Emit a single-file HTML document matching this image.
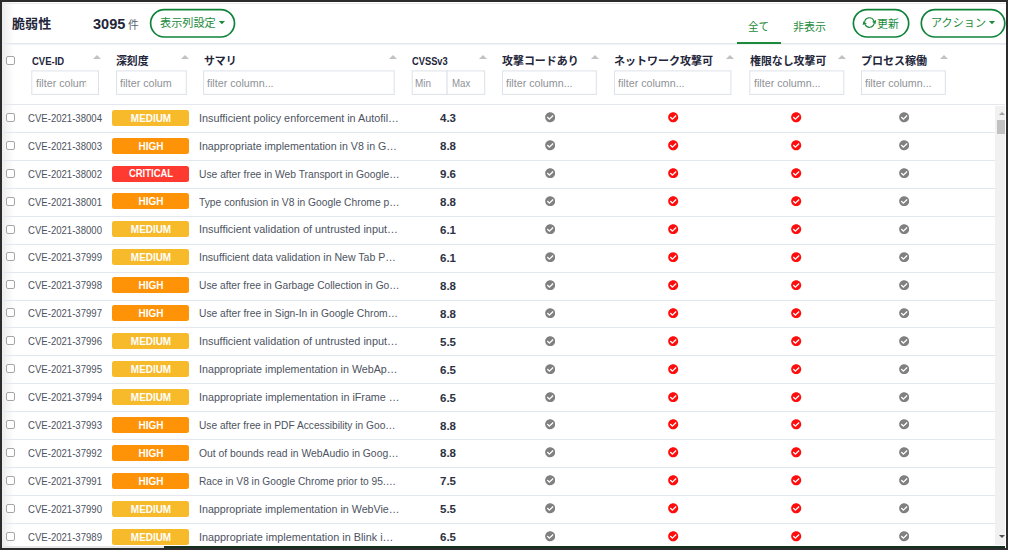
<!DOCTYPE html><html lang="ja"><head><meta charset="utf-8"><title>脆弱性</title><style>

html,body{margin:0;padding:0;background:#fff}
body{width:1010px;height:552px;position:relative;overflow:hidden;font-family:"Liberation Sans","Noto Sans CJK JP",sans-serif}
.t{position:absolute;white-space:nowrap;line-height:1;transform-origin:0 50%;display:block}
.fr{position:absolute;left:0;top:0;width:1004px;height:546px;border:2px solid #2b2b2b;box-sizing:content-box}
.hl{position:absolute;left:2px;width:1004px;height:1px;background:#e4e8ed}
.rl{position:absolute;left:2px;width:993px;height:1px;background:#e3e8ee}
.cb{position:absolute;left:6.2px;width:7px;height:7px;border:1px solid #a6a6a6;border-radius:2px;background:#fff}
.bd{position:absolute;left:112px;width:77.3px;height:16px;border-radius:2.5px}
.in{position:absolute;top:70.5px;height:22.4px;border:1px solid #dde3ea;background:#fff;box-sizing:content-box;overflow:hidden}
.ic{position:absolute;display:block}
.ar{position:absolute;width:0;height:0;border-left:4.3px solid transparent;border-right:4.3px solid transparent;border-bottom:4px solid #c2c2c2;top:54.6px}
svg.ov{position:absolute;left:0;top:0}

</style></head><body>
<div style="position:absolute;left:2px;top:2px;width:12px;height:544px;background:linear-gradient(90deg,#ececec,#fff)"></div>
<div class="hl" style="top:3px;background:#e9e9e9"></div>
<div class="hl" style="top:43px;background:#e5e8ec"></div>
<div class="hl" style="top:44px;background:#eff1f4"></div>
<div class="hl" style="top:104px;width:1003px"></div>
<div style="position:absolute;left:737px;top:41.7px;width:44px;height:2.3px;background:#1b8a3b"></div>
<div style="position:absolute;left:995.3px;top:105.5px;width:10.2px;height:439px;background:#f1f1f1"></div>
<div style="position:absolute;left:996.8px;top:120.3px;width:8.7px;height:14.1px;background:#c1c1c1"></div>
<div style="position:absolute;left:999px;top:111.6px;width:0;height:0;border-left:3.2px solid transparent;border-right:3.2px solid transparent;border-bottom:3.2px solid #a3a3a3"></div>
<div style="position:absolute;left:999px;top:535.4px;width:0;height:0;border-left:3.2px solid transparent;border-right:3.2px solid transparent;border-top:3.2px solid #505050"></div>
<div style="position:absolute;left:2px;top:546px;width:162px;height:2px;background:#e6e6e6"></div>
<div style="position:absolute;left:164px;top:546px;width:841px;height:2px;background:#15301f"></div>
<div class="cb" style="top:56.3px"></div>
<div class="ar" style="left:93.10px"></div>
<div class="ar" style="left:180.90px"></div>
<div class="ar" style="left:388.80px"></div>
<div class="ar" style="left:479.30px"></div>
<div class="ar" style="left:590.90px"></div>
<div class="ar" style="left:725.50px"></div>
<div class="ar" style="left:838.40px"></div>
<div class="ar" style="left:939.90px"></div>
<svg class="ov" width="1010" height="552" viewBox="0 0 1010 552" fill="none">
<rect x="150.60" y="9.6" width="83.90" height="27.4" rx="13.7" stroke="#10833a" stroke-width="1.7" fill="#fff"/>
<rect x="853.40" y="9.6" width="55.30" height="27.4" rx="13.7" stroke="#10833a" stroke-width="1.7" fill="#fff"/>
<rect x="921.30" y="9.6" width="83.50" height="27.4" rx="13.7" stroke="#10833a" stroke-width="1.7" fill="#fff"/>
<rect x="31.80" y="70.9" width="66.70" height="23.5" stroke="#dce2e9" stroke-width="1" fill="#fff"/>
<rect x="116.60" y="70.9" width="69.70" height="23.5" stroke="#dce2e9" stroke-width="1" fill="#fff"/>
<rect x="203.60" y="70.9" width="190.60" height="23.5" stroke="#dce2e9" stroke-width="1" fill="#fff"/>
<rect x="412.20" y="70.9" width="34.90" height="23.5" stroke="#dce2e9" stroke-width="1" fill="#fff"/>
<rect x="447.10" y="70.9" width="37.60" height="23.5" stroke="#dce2e9" stroke-width="1" fill="#fff"/>
<rect x="502.50" y="70.9" width="93.80" height="23.5" stroke="#dce2e9" stroke-width="1" fill="#fff"/>
<rect x="614.50" y="70.9" width="116.40" height="23.5" stroke="#dce2e9" stroke-width="1" fill="#fff"/>
<rect x="749.80" y="70.9" width="94.00" height="23.5" stroke="#dce2e9" stroke-width="1" fill="#fff"/>
<rect x="861.50" y="70.9" width="83.80" height="23.5" stroke="#dce2e9" stroke-width="1" fill="#fff"/>
<path d="M218.80 20.9h6.2l-3.1 3.3z" fill="#1b8a3b"/>
<path d="M988.90 20.9h6.2l-3.1 3.3z" fill="#1b8a3b"/>
<g stroke="#1b8a3b" stroke-width="1.15" fill="none" stroke-linecap="round"><path d="M864.7 21.7A4.75 4.75 0 0 1 873.7 20.6"/><path d="M874.1 23.4A4.75 4.75 0 0 1 865.1 24.5"/></g><path d="M876.2 20.1L875.5 23.9L872.0 21.7Z" fill="#1b8a3b"/><path d="M862.6 25.0L863.3 21.2L866.8 23.4Z" fill="#1b8a3b"/>
</svg>
<div class="rl" style="top:131.93px"></div>
<div class="cb" style="top:112.80px"></div>
<div class="bd" style="top:109.70px;background:#f6ba2b"></div>
<svg class="ic" style="left:544.60px;top:112.20px" width="10.4" height="10.4" viewBox="0 0 512 512"><path fill="#808080" d="M504 256c0 136.967-111.033 248-248 248S8 392.967 8 256 119.033 8 256 8s248 111.033 248 248zM227.314 387.314l184-184c6.248-6.248 6.248-16.379 0-22.627l-22.627-22.627c-6.248-6.249-16.379-6.249-22.628 0L216 308.118l-70.059-70.059c-6.248-6.248-16.379-6.248-22.628 0l-22.627 22.627c-6.248 6.248-6.248 16.379 0 22.627l104 104c6.249 6.249 16.379 6.249 22.628.001z"/></svg>
<svg class="ic" style="left:668.30px;top:112.20px" width="10.4" height="10.4" viewBox="0 0 512 512"><path fill="#ff0d0d" d="M504 256c0 136.967-111.033 248-248 248S8 392.967 8 256 119.033 8 256 8s248 111.033 248 248zM227.314 387.314l184-184c6.248-6.248 6.248-16.379 0-22.627l-22.627-22.627c-6.248-6.249-16.379-6.249-22.628 0L216 308.118l-70.059-70.059c-6.248-6.248-16.379-6.248-22.628 0l-22.627 22.627c-6.248 6.248-6.248 16.379 0 22.627l104 104c6.249 6.249 16.379 6.249 22.628.001z"/></svg>
<svg class="ic" style="left:791.40px;top:112.20px" width="10.4" height="10.4" viewBox="0 0 512 512"><path fill="#ff0d0d" d="M504 256c0 136.967-111.033 248-248 248S8 392.967 8 256 119.033 8 256 8s248 111.033 248 248zM227.314 387.314l184-184c6.248-6.248 6.248-16.379 0-22.627l-22.627-22.627c-6.248-6.249-16.379-6.249-22.628 0L216 308.118l-70.059-70.059c-6.248-6.248-16.379-6.248-22.628 0l-22.627 22.627c-6.248 6.248-6.248 16.379 0 22.627l104 104c6.249 6.249 16.379 6.249 22.628.001z"/></svg>
<svg class="ic" style="left:898.50px;top:112.20px" width="10.4" height="10.4" viewBox="0 0 512 512"><path fill="#808080" d="M504 256c0 136.967-111.033 248-248 248S8 392.967 8 256 119.033 8 256 8s248 111.033 248 248zM227.314 387.314l184-184c6.248-6.248 6.248-16.379 0-22.627l-22.627-22.627c-6.248-6.249-16.379-6.249-22.628 0L216 308.118l-70.059-70.059c-6.248-6.248-16.379-6.248-22.628 0l-22.627 22.627c-6.248 6.248-6.248 16.379 0 22.627l104 104c6.249 6.249 16.379 6.249 22.628.001z"/></svg>
<div class="rl" style="top:159.86px"></div>
<div class="cb" style="top:140.73px"></div>
<div class="bd" style="top:137.63px;background:#ff9307"></div>
<svg class="ic" style="left:544.60px;top:140.13px" width="10.4" height="10.4" viewBox="0 0 512 512"><path fill="#808080" d="M504 256c0 136.967-111.033 248-248 248S8 392.967 8 256 119.033 8 256 8s248 111.033 248 248zM227.314 387.314l184-184c6.248-6.248 6.248-16.379 0-22.627l-22.627-22.627c-6.248-6.249-16.379-6.249-22.628 0L216 308.118l-70.059-70.059c-6.248-6.248-16.379-6.248-22.628 0l-22.627 22.627c-6.248 6.248-6.248 16.379 0 22.627l104 104c6.249 6.249 16.379 6.249 22.628.001z"/></svg>
<svg class="ic" style="left:668.30px;top:140.13px" width="10.4" height="10.4" viewBox="0 0 512 512"><path fill="#ff0d0d" d="M504 256c0 136.967-111.033 248-248 248S8 392.967 8 256 119.033 8 256 8s248 111.033 248 248zM227.314 387.314l184-184c6.248-6.248 6.248-16.379 0-22.627l-22.627-22.627c-6.248-6.249-16.379-6.249-22.628 0L216 308.118l-70.059-70.059c-6.248-6.248-16.379-6.248-22.628 0l-22.627 22.627c-6.248 6.248-6.248 16.379 0 22.627l104 104c6.249 6.249 16.379 6.249 22.628.001z"/></svg>
<svg class="ic" style="left:791.40px;top:140.13px" width="10.4" height="10.4" viewBox="0 0 512 512"><path fill="#ff0d0d" d="M504 256c0 136.967-111.033 248-248 248S8 392.967 8 256 119.033 8 256 8s248 111.033 248 248zM227.314 387.314l184-184c6.248-6.248 6.248-16.379 0-22.627l-22.627-22.627c-6.248-6.249-16.379-6.249-22.628 0L216 308.118l-70.059-70.059c-6.248-6.248-16.379-6.248-22.628 0l-22.627 22.627c-6.248 6.248-6.248 16.379 0 22.627l104 104c6.249 6.249 16.379 6.249 22.628.001z"/></svg>
<svg class="ic" style="left:898.50px;top:140.13px" width="10.4" height="10.4" viewBox="0 0 512 512"><path fill="#808080" d="M504 256c0 136.967-111.033 248-248 248S8 392.967 8 256 119.033 8 256 8s248 111.033 248 248zM227.314 387.314l184-184c6.248-6.248 6.248-16.379 0-22.627l-22.627-22.627c-6.248-6.249-16.379-6.249-22.628 0L216 308.118l-70.059-70.059c-6.248-6.248-16.379-6.248-22.628 0l-22.627 22.627c-6.248 6.248-6.248 16.379 0 22.627l104 104c6.249 6.249 16.379 6.249 22.628.001z"/></svg>
<div class="rl" style="top:187.79px"></div>
<div class="cb" style="top:168.66px"></div>
<div class="bd" style="top:165.56px;background:#ff3a30"></div>
<svg class="ic" style="left:544.60px;top:168.06px" width="10.4" height="10.4" viewBox="0 0 512 512"><path fill="#808080" d="M504 256c0 136.967-111.033 248-248 248S8 392.967 8 256 119.033 8 256 8s248 111.033 248 248zM227.314 387.314l184-184c6.248-6.248 6.248-16.379 0-22.627l-22.627-22.627c-6.248-6.249-16.379-6.249-22.628 0L216 308.118l-70.059-70.059c-6.248-6.248-16.379-6.248-22.628 0l-22.627 22.627c-6.248 6.248-6.248 16.379 0 22.627l104 104c6.249 6.249 16.379 6.249 22.628.001z"/></svg>
<svg class="ic" style="left:668.30px;top:168.06px" width="10.4" height="10.4" viewBox="0 0 512 512"><path fill="#ff0d0d" d="M504 256c0 136.967-111.033 248-248 248S8 392.967 8 256 119.033 8 256 8s248 111.033 248 248zM227.314 387.314l184-184c6.248-6.248 6.248-16.379 0-22.627l-22.627-22.627c-6.248-6.249-16.379-6.249-22.628 0L216 308.118l-70.059-70.059c-6.248-6.248-16.379-6.248-22.628 0l-22.627 22.627c-6.248 6.248-6.248 16.379 0 22.627l104 104c6.249 6.249 16.379 6.249 22.628.001z"/></svg>
<svg class="ic" style="left:791.40px;top:168.06px" width="10.4" height="10.4" viewBox="0 0 512 512"><path fill="#ff0d0d" d="M504 256c0 136.967-111.033 248-248 248S8 392.967 8 256 119.033 8 256 8s248 111.033 248 248zM227.314 387.314l184-184c6.248-6.248 6.248-16.379 0-22.627l-22.627-22.627c-6.248-6.249-16.379-6.249-22.628 0L216 308.118l-70.059-70.059c-6.248-6.248-16.379-6.248-22.628 0l-22.627 22.627c-6.248 6.248-6.248 16.379 0 22.627l104 104c6.249 6.249 16.379 6.249 22.628.001z"/></svg>
<svg class="ic" style="left:898.50px;top:168.06px" width="10.4" height="10.4" viewBox="0 0 512 512"><path fill="#808080" d="M504 256c0 136.967-111.033 248-248 248S8 392.967 8 256 119.033 8 256 8s248 111.033 248 248zM227.314 387.314l184-184c6.248-6.248 6.248-16.379 0-22.627l-22.627-22.627c-6.248-6.249-16.379-6.249-22.628 0L216 308.118l-70.059-70.059c-6.248-6.248-16.379-6.248-22.628 0l-22.627 22.627c-6.248 6.248-6.248 16.379 0 22.627l104 104c6.249 6.249 16.379 6.249 22.628.001z"/></svg>
<div class="rl" style="top:215.72px"></div>
<div class="cb" style="top:196.59px"></div>
<div class="bd" style="top:193.49px;background:#ff9307"></div>
<svg class="ic" style="left:544.60px;top:195.99px" width="10.4" height="10.4" viewBox="0 0 512 512"><path fill="#808080" d="M504 256c0 136.967-111.033 248-248 248S8 392.967 8 256 119.033 8 256 8s248 111.033 248 248zM227.314 387.314l184-184c6.248-6.248 6.248-16.379 0-22.627l-22.627-22.627c-6.248-6.249-16.379-6.249-22.628 0L216 308.118l-70.059-70.059c-6.248-6.248-16.379-6.248-22.628 0l-22.627 22.627c-6.248 6.248-6.248 16.379 0 22.627l104 104c6.249 6.249 16.379 6.249 22.628.001z"/></svg>
<svg class="ic" style="left:668.30px;top:195.99px" width="10.4" height="10.4" viewBox="0 0 512 512"><path fill="#ff0d0d" d="M504 256c0 136.967-111.033 248-248 248S8 392.967 8 256 119.033 8 256 8s248 111.033 248 248zM227.314 387.314l184-184c6.248-6.248 6.248-16.379 0-22.627l-22.627-22.627c-6.248-6.249-16.379-6.249-22.628 0L216 308.118l-70.059-70.059c-6.248-6.248-16.379-6.248-22.628 0l-22.627 22.627c-6.248 6.248-6.248 16.379 0 22.627l104 104c6.249 6.249 16.379 6.249 22.628.001z"/></svg>
<svg class="ic" style="left:791.40px;top:195.99px" width="10.4" height="10.4" viewBox="0 0 512 512"><path fill="#ff0d0d" d="M504 256c0 136.967-111.033 248-248 248S8 392.967 8 256 119.033 8 256 8s248 111.033 248 248zM227.314 387.314l184-184c6.248-6.248 6.248-16.379 0-22.627l-22.627-22.627c-6.248-6.249-16.379-6.249-22.628 0L216 308.118l-70.059-70.059c-6.248-6.248-16.379-6.248-22.628 0l-22.627 22.627c-6.248 6.248-6.248 16.379 0 22.627l104 104c6.249 6.249 16.379 6.249 22.628.001z"/></svg>
<svg class="ic" style="left:898.50px;top:195.99px" width="10.4" height="10.4" viewBox="0 0 512 512"><path fill="#808080" d="M504 256c0 136.967-111.033 248-248 248S8 392.967 8 256 119.033 8 256 8s248 111.033 248 248zM227.314 387.314l184-184c6.248-6.248 6.248-16.379 0-22.627l-22.627-22.627c-6.248-6.249-16.379-6.249-22.628 0L216 308.118l-70.059-70.059c-6.248-6.248-16.379-6.248-22.628 0l-22.627 22.627c-6.248 6.248-6.248 16.379 0 22.627l104 104c6.249 6.249 16.379 6.249 22.628.001z"/></svg>
<div class="rl" style="top:243.65px"></div>
<div class="cb" style="top:224.52px"></div>
<div class="bd" style="top:221.42px;background:#f6ba2b"></div>
<svg class="ic" style="left:544.60px;top:223.92px" width="10.4" height="10.4" viewBox="0 0 512 512"><path fill="#808080" d="M504 256c0 136.967-111.033 248-248 248S8 392.967 8 256 119.033 8 256 8s248 111.033 248 248zM227.314 387.314l184-184c6.248-6.248 6.248-16.379 0-22.627l-22.627-22.627c-6.248-6.249-16.379-6.249-22.628 0L216 308.118l-70.059-70.059c-6.248-6.248-16.379-6.248-22.628 0l-22.627 22.627c-6.248 6.248-6.248 16.379 0 22.627l104 104c6.249 6.249 16.379 6.249 22.628.001z"/></svg>
<svg class="ic" style="left:668.30px;top:223.92px" width="10.4" height="10.4" viewBox="0 0 512 512"><path fill="#ff0d0d" d="M504 256c0 136.967-111.033 248-248 248S8 392.967 8 256 119.033 8 256 8s248 111.033 248 248zM227.314 387.314l184-184c6.248-6.248 6.248-16.379 0-22.627l-22.627-22.627c-6.248-6.249-16.379-6.249-22.628 0L216 308.118l-70.059-70.059c-6.248-6.248-16.379-6.248-22.628 0l-22.627 22.627c-6.248 6.248-6.248 16.379 0 22.627l104 104c6.249 6.249 16.379 6.249 22.628.001z"/></svg>
<svg class="ic" style="left:791.40px;top:223.92px" width="10.4" height="10.4" viewBox="0 0 512 512"><path fill="#ff0d0d" d="M504 256c0 136.967-111.033 248-248 248S8 392.967 8 256 119.033 8 256 8s248 111.033 248 248zM227.314 387.314l184-184c6.248-6.248 6.248-16.379 0-22.627l-22.627-22.627c-6.248-6.249-16.379-6.249-22.628 0L216 308.118l-70.059-70.059c-6.248-6.248-16.379-6.248-22.628 0l-22.627 22.627c-6.248 6.248-6.248 16.379 0 22.627l104 104c6.249 6.249 16.379 6.249 22.628.001z"/></svg>
<svg class="ic" style="left:898.50px;top:223.92px" width="10.4" height="10.4" viewBox="0 0 512 512"><path fill="#808080" d="M504 256c0 136.967-111.033 248-248 248S8 392.967 8 256 119.033 8 256 8s248 111.033 248 248zM227.314 387.314l184-184c6.248-6.248 6.248-16.379 0-22.627l-22.627-22.627c-6.248-6.249-16.379-6.249-22.628 0L216 308.118l-70.059-70.059c-6.248-6.248-16.379-6.248-22.628 0l-22.627 22.627c-6.248 6.248-6.248 16.379 0 22.627l104 104c6.249 6.249 16.379 6.249 22.628.001z"/></svg>
<div class="rl" style="top:271.58px"></div>
<div class="cb" style="top:252.45px"></div>
<div class="bd" style="top:249.35px;background:#f6ba2b"></div>
<svg class="ic" style="left:544.60px;top:251.85px" width="10.4" height="10.4" viewBox="0 0 512 512"><path fill="#808080" d="M504 256c0 136.967-111.033 248-248 248S8 392.967 8 256 119.033 8 256 8s248 111.033 248 248zM227.314 387.314l184-184c6.248-6.248 6.248-16.379 0-22.627l-22.627-22.627c-6.248-6.249-16.379-6.249-22.628 0L216 308.118l-70.059-70.059c-6.248-6.248-16.379-6.248-22.628 0l-22.627 22.627c-6.248 6.248-6.248 16.379 0 22.627l104 104c6.249 6.249 16.379 6.249 22.628.001z"/></svg>
<svg class="ic" style="left:668.30px;top:251.85px" width="10.4" height="10.4" viewBox="0 0 512 512"><path fill="#ff0d0d" d="M504 256c0 136.967-111.033 248-248 248S8 392.967 8 256 119.033 8 256 8s248 111.033 248 248zM227.314 387.314l184-184c6.248-6.248 6.248-16.379 0-22.627l-22.627-22.627c-6.248-6.249-16.379-6.249-22.628 0L216 308.118l-70.059-70.059c-6.248-6.248-16.379-6.248-22.628 0l-22.627 22.627c-6.248 6.248-6.248 16.379 0 22.627l104 104c6.249 6.249 16.379 6.249 22.628.001z"/></svg>
<svg class="ic" style="left:791.40px;top:251.85px" width="10.4" height="10.4" viewBox="0 0 512 512"><path fill="#ff0d0d" d="M504 256c0 136.967-111.033 248-248 248S8 392.967 8 256 119.033 8 256 8s248 111.033 248 248zM227.314 387.314l184-184c6.248-6.248 6.248-16.379 0-22.627l-22.627-22.627c-6.248-6.249-16.379-6.249-22.628 0L216 308.118l-70.059-70.059c-6.248-6.248-16.379-6.248-22.628 0l-22.627 22.627c-6.248 6.248-6.248 16.379 0 22.627l104 104c6.249 6.249 16.379 6.249 22.628.001z"/></svg>
<svg class="ic" style="left:898.50px;top:251.85px" width="10.4" height="10.4" viewBox="0 0 512 512"><path fill="#808080" d="M504 256c0 136.967-111.033 248-248 248S8 392.967 8 256 119.033 8 256 8s248 111.033 248 248zM227.314 387.314l184-184c6.248-6.248 6.248-16.379 0-22.627l-22.627-22.627c-6.248-6.249-16.379-6.249-22.628 0L216 308.118l-70.059-70.059c-6.248-6.248-16.379-6.248-22.628 0l-22.627 22.627c-6.248 6.248-6.248 16.379 0 22.627l104 104c6.249 6.249 16.379 6.249 22.628.001z"/></svg>
<div class="rl" style="top:299.51px"></div>
<div class="cb" style="top:280.38px"></div>
<div class="bd" style="top:277.28px;background:#ff9307"></div>
<svg class="ic" style="left:544.60px;top:279.78px" width="10.4" height="10.4" viewBox="0 0 512 512"><path fill="#808080" d="M504 256c0 136.967-111.033 248-248 248S8 392.967 8 256 119.033 8 256 8s248 111.033 248 248zM227.314 387.314l184-184c6.248-6.248 6.248-16.379 0-22.627l-22.627-22.627c-6.248-6.249-16.379-6.249-22.628 0L216 308.118l-70.059-70.059c-6.248-6.248-16.379-6.248-22.628 0l-22.627 22.627c-6.248 6.248-6.248 16.379 0 22.627l104 104c6.249 6.249 16.379 6.249 22.628.001z"/></svg>
<svg class="ic" style="left:668.30px;top:279.78px" width="10.4" height="10.4" viewBox="0 0 512 512"><path fill="#ff0d0d" d="M504 256c0 136.967-111.033 248-248 248S8 392.967 8 256 119.033 8 256 8s248 111.033 248 248zM227.314 387.314l184-184c6.248-6.248 6.248-16.379 0-22.627l-22.627-22.627c-6.248-6.249-16.379-6.249-22.628 0L216 308.118l-70.059-70.059c-6.248-6.248-16.379-6.248-22.628 0l-22.627 22.627c-6.248 6.248-6.248 16.379 0 22.627l104 104c6.249 6.249 16.379 6.249 22.628.001z"/></svg>
<svg class="ic" style="left:791.40px;top:279.78px" width="10.4" height="10.4" viewBox="0 0 512 512"><path fill="#ff0d0d" d="M504 256c0 136.967-111.033 248-248 248S8 392.967 8 256 119.033 8 256 8s248 111.033 248 248zM227.314 387.314l184-184c6.248-6.248 6.248-16.379 0-22.627l-22.627-22.627c-6.248-6.249-16.379-6.249-22.628 0L216 308.118l-70.059-70.059c-6.248-6.248-16.379-6.248-22.628 0l-22.627 22.627c-6.248 6.248-6.248 16.379 0 22.627l104 104c6.249 6.249 16.379 6.249 22.628.001z"/></svg>
<svg class="ic" style="left:898.50px;top:279.78px" width="10.4" height="10.4" viewBox="0 0 512 512"><path fill="#808080" d="M504 256c0 136.967-111.033 248-248 248S8 392.967 8 256 119.033 8 256 8s248 111.033 248 248zM227.314 387.314l184-184c6.248-6.248 6.248-16.379 0-22.627l-22.627-22.627c-6.248-6.249-16.379-6.249-22.628 0L216 308.118l-70.059-70.059c-6.248-6.248-16.379-6.248-22.628 0l-22.627 22.627c-6.248 6.248-6.248 16.379 0 22.627l104 104c6.249 6.249 16.379 6.249 22.628.001z"/></svg>
<div class="rl" style="top:327.44px"></div>
<div class="cb" style="top:308.31px"></div>
<div class="bd" style="top:305.21px;background:#ff9307"></div>
<svg class="ic" style="left:544.60px;top:307.71px" width="10.4" height="10.4" viewBox="0 0 512 512"><path fill="#808080" d="M504 256c0 136.967-111.033 248-248 248S8 392.967 8 256 119.033 8 256 8s248 111.033 248 248zM227.314 387.314l184-184c6.248-6.248 6.248-16.379 0-22.627l-22.627-22.627c-6.248-6.249-16.379-6.249-22.628 0L216 308.118l-70.059-70.059c-6.248-6.248-16.379-6.248-22.628 0l-22.627 22.627c-6.248 6.248-6.248 16.379 0 22.627l104 104c6.249 6.249 16.379 6.249 22.628.001z"/></svg>
<svg class="ic" style="left:668.30px;top:307.71px" width="10.4" height="10.4" viewBox="0 0 512 512"><path fill="#ff0d0d" d="M504 256c0 136.967-111.033 248-248 248S8 392.967 8 256 119.033 8 256 8s248 111.033 248 248zM227.314 387.314l184-184c6.248-6.248 6.248-16.379 0-22.627l-22.627-22.627c-6.248-6.249-16.379-6.249-22.628 0L216 308.118l-70.059-70.059c-6.248-6.248-16.379-6.248-22.628 0l-22.627 22.627c-6.248 6.248-6.248 16.379 0 22.627l104 104c6.249 6.249 16.379 6.249 22.628.001z"/></svg>
<svg class="ic" style="left:791.40px;top:307.71px" width="10.4" height="10.4" viewBox="0 0 512 512"><path fill="#ff0d0d" d="M504 256c0 136.967-111.033 248-248 248S8 392.967 8 256 119.033 8 256 8s248 111.033 248 248zM227.314 387.314l184-184c6.248-6.248 6.248-16.379 0-22.627l-22.627-22.627c-6.248-6.249-16.379-6.249-22.628 0L216 308.118l-70.059-70.059c-6.248-6.248-16.379-6.248-22.628 0l-22.627 22.627c-6.248 6.248-6.248 16.379 0 22.627l104 104c6.249 6.249 16.379 6.249 22.628.001z"/></svg>
<svg class="ic" style="left:898.50px;top:307.71px" width="10.4" height="10.4" viewBox="0 0 512 512"><path fill="#808080" d="M504 256c0 136.967-111.033 248-248 248S8 392.967 8 256 119.033 8 256 8s248 111.033 248 248zM227.314 387.314l184-184c6.248-6.248 6.248-16.379 0-22.627l-22.627-22.627c-6.248-6.249-16.379-6.249-22.628 0L216 308.118l-70.059-70.059c-6.248-6.248-16.379-6.248-22.628 0l-22.627 22.627c-6.248 6.248-6.248 16.379 0 22.627l104 104c6.249 6.249 16.379 6.249 22.628.001z"/></svg>
<div class="rl" style="top:355.37px"></div>
<div class="cb" style="top:336.24px"></div>
<div class="bd" style="top:333.14px;background:#f6ba2b"></div>
<svg class="ic" style="left:544.60px;top:335.64px" width="10.4" height="10.4" viewBox="0 0 512 512"><path fill="#808080" d="M504 256c0 136.967-111.033 248-248 248S8 392.967 8 256 119.033 8 256 8s248 111.033 248 248zM227.314 387.314l184-184c6.248-6.248 6.248-16.379 0-22.627l-22.627-22.627c-6.248-6.249-16.379-6.249-22.628 0L216 308.118l-70.059-70.059c-6.248-6.248-16.379-6.248-22.628 0l-22.627 22.627c-6.248 6.248-6.248 16.379 0 22.627l104 104c6.249 6.249 16.379 6.249 22.628.001z"/></svg>
<svg class="ic" style="left:668.30px;top:335.64px" width="10.4" height="10.4" viewBox="0 0 512 512"><path fill="#ff0d0d" d="M504 256c0 136.967-111.033 248-248 248S8 392.967 8 256 119.033 8 256 8s248 111.033 248 248zM227.314 387.314l184-184c6.248-6.248 6.248-16.379 0-22.627l-22.627-22.627c-6.248-6.249-16.379-6.249-22.628 0L216 308.118l-70.059-70.059c-6.248-6.248-16.379-6.248-22.628 0l-22.627 22.627c-6.248 6.248-6.248 16.379 0 22.627l104 104c6.249 6.249 16.379 6.249 22.628.001z"/></svg>
<svg class="ic" style="left:791.40px;top:335.64px" width="10.4" height="10.4" viewBox="0 0 512 512"><path fill="#ff0d0d" d="M504 256c0 136.967-111.033 248-248 248S8 392.967 8 256 119.033 8 256 8s248 111.033 248 248zM227.314 387.314l184-184c6.248-6.248 6.248-16.379 0-22.627l-22.627-22.627c-6.248-6.249-16.379-6.249-22.628 0L216 308.118l-70.059-70.059c-6.248-6.248-16.379-6.248-22.628 0l-22.627 22.627c-6.248 6.248-6.248 16.379 0 22.627l104 104c6.249 6.249 16.379 6.249 22.628.001z"/></svg>
<svg class="ic" style="left:898.50px;top:335.64px" width="10.4" height="10.4" viewBox="0 0 512 512"><path fill="#808080" d="M504 256c0 136.967-111.033 248-248 248S8 392.967 8 256 119.033 8 256 8s248 111.033 248 248zM227.314 387.314l184-184c6.248-6.248 6.248-16.379 0-22.627l-22.627-22.627c-6.248-6.249-16.379-6.249-22.628 0L216 308.118l-70.059-70.059c-6.248-6.248-16.379-6.248-22.628 0l-22.627 22.627c-6.248 6.248-6.248 16.379 0 22.627l104 104c6.249 6.249 16.379 6.249 22.628.001z"/></svg>
<div class="rl" style="top:383.30px"></div>
<div class="cb" style="top:364.17px"></div>
<div class="bd" style="top:361.07px;background:#f6ba2b"></div>
<svg class="ic" style="left:544.60px;top:363.57px" width="10.4" height="10.4" viewBox="0 0 512 512"><path fill="#808080" d="M504 256c0 136.967-111.033 248-248 248S8 392.967 8 256 119.033 8 256 8s248 111.033 248 248zM227.314 387.314l184-184c6.248-6.248 6.248-16.379 0-22.627l-22.627-22.627c-6.248-6.249-16.379-6.249-22.628 0L216 308.118l-70.059-70.059c-6.248-6.248-16.379-6.248-22.628 0l-22.627 22.627c-6.248 6.248-6.248 16.379 0 22.627l104 104c6.249 6.249 16.379 6.249 22.628.001z"/></svg>
<svg class="ic" style="left:668.30px;top:363.57px" width="10.4" height="10.4" viewBox="0 0 512 512"><path fill="#ff0d0d" d="M504 256c0 136.967-111.033 248-248 248S8 392.967 8 256 119.033 8 256 8s248 111.033 248 248zM227.314 387.314l184-184c6.248-6.248 6.248-16.379 0-22.627l-22.627-22.627c-6.248-6.249-16.379-6.249-22.628 0L216 308.118l-70.059-70.059c-6.248-6.248-16.379-6.248-22.628 0l-22.627 22.627c-6.248 6.248-6.248 16.379 0 22.627l104 104c6.249 6.249 16.379 6.249 22.628.001z"/></svg>
<svg class="ic" style="left:791.40px;top:363.57px" width="10.4" height="10.4" viewBox="0 0 512 512"><path fill="#ff0d0d" d="M504 256c0 136.967-111.033 248-248 248S8 392.967 8 256 119.033 8 256 8s248 111.033 248 248zM227.314 387.314l184-184c6.248-6.248 6.248-16.379 0-22.627l-22.627-22.627c-6.248-6.249-16.379-6.249-22.628 0L216 308.118l-70.059-70.059c-6.248-6.248-16.379-6.248-22.628 0l-22.627 22.627c-6.248 6.248-6.248 16.379 0 22.627l104 104c6.249 6.249 16.379 6.249 22.628.001z"/></svg>
<svg class="ic" style="left:898.50px;top:363.57px" width="10.4" height="10.4" viewBox="0 0 512 512"><path fill="#808080" d="M504 256c0 136.967-111.033 248-248 248S8 392.967 8 256 119.033 8 256 8s248 111.033 248 248zM227.314 387.314l184-184c6.248-6.248 6.248-16.379 0-22.627l-22.627-22.627c-6.248-6.249-16.379-6.249-22.628 0L216 308.118l-70.059-70.059c-6.248-6.248-16.379-6.248-22.628 0l-22.627 22.627c-6.248 6.248-6.248 16.379 0 22.627l104 104c6.249 6.249 16.379 6.249 22.628.001z"/></svg>
<div class="rl" style="top:411.23px"></div>
<div class="cb" style="top:392.10px"></div>
<div class="bd" style="top:389.00px;background:#f6ba2b"></div>
<svg class="ic" style="left:544.60px;top:391.50px" width="10.4" height="10.4" viewBox="0 0 512 512"><path fill="#808080" d="M504 256c0 136.967-111.033 248-248 248S8 392.967 8 256 119.033 8 256 8s248 111.033 248 248zM227.314 387.314l184-184c6.248-6.248 6.248-16.379 0-22.627l-22.627-22.627c-6.248-6.249-16.379-6.249-22.628 0L216 308.118l-70.059-70.059c-6.248-6.248-16.379-6.248-22.628 0l-22.627 22.627c-6.248 6.248-6.248 16.379 0 22.627l104 104c6.249 6.249 16.379 6.249 22.628.001z"/></svg>
<svg class="ic" style="left:668.30px;top:391.50px" width="10.4" height="10.4" viewBox="0 0 512 512"><path fill="#ff0d0d" d="M504 256c0 136.967-111.033 248-248 248S8 392.967 8 256 119.033 8 256 8s248 111.033 248 248zM227.314 387.314l184-184c6.248-6.248 6.248-16.379 0-22.627l-22.627-22.627c-6.248-6.249-16.379-6.249-22.628 0L216 308.118l-70.059-70.059c-6.248-6.248-16.379-6.248-22.628 0l-22.627 22.627c-6.248 6.248-6.248 16.379 0 22.627l104 104c6.249 6.249 16.379 6.249 22.628.001z"/></svg>
<svg class="ic" style="left:791.40px;top:391.50px" width="10.4" height="10.4" viewBox="0 0 512 512"><path fill="#ff0d0d" d="M504 256c0 136.967-111.033 248-248 248S8 392.967 8 256 119.033 8 256 8s248 111.033 248 248zM227.314 387.314l184-184c6.248-6.248 6.248-16.379 0-22.627l-22.627-22.627c-6.248-6.249-16.379-6.249-22.628 0L216 308.118l-70.059-70.059c-6.248-6.248-16.379-6.248-22.628 0l-22.627 22.627c-6.248 6.248-6.248 16.379 0 22.627l104 104c6.249 6.249 16.379 6.249 22.628.001z"/></svg>
<svg class="ic" style="left:898.50px;top:391.50px" width="10.4" height="10.4" viewBox="0 0 512 512"><path fill="#808080" d="M504 256c0 136.967-111.033 248-248 248S8 392.967 8 256 119.033 8 256 8s248 111.033 248 248zM227.314 387.314l184-184c6.248-6.248 6.248-16.379 0-22.627l-22.627-22.627c-6.248-6.249-16.379-6.249-22.628 0L216 308.118l-70.059-70.059c-6.248-6.248-16.379-6.248-22.628 0l-22.627 22.627c-6.248 6.248-6.248 16.379 0 22.627l104 104c6.249 6.249 16.379 6.249 22.628.001z"/></svg>
<div class="rl" style="top:439.16px"></div>
<div class="cb" style="top:420.03px"></div>
<div class="bd" style="top:416.93px;background:#ff9307"></div>
<svg class="ic" style="left:544.60px;top:419.43px" width="10.4" height="10.4" viewBox="0 0 512 512"><path fill="#808080" d="M504 256c0 136.967-111.033 248-248 248S8 392.967 8 256 119.033 8 256 8s248 111.033 248 248zM227.314 387.314l184-184c6.248-6.248 6.248-16.379 0-22.627l-22.627-22.627c-6.248-6.249-16.379-6.249-22.628 0L216 308.118l-70.059-70.059c-6.248-6.248-16.379-6.248-22.628 0l-22.627 22.627c-6.248 6.248-6.248 16.379 0 22.627l104 104c6.249 6.249 16.379 6.249 22.628.001z"/></svg>
<svg class="ic" style="left:668.30px;top:419.43px" width="10.4" height="10.4" viewBox="0 0 512 512"><path fill="#ff0d0d" d="M504 256c0 136.967-111.033 248-248 248S8 392.967 8 256 119.033 8 256 8s248 111.033 248 248zM227.314 387.314l184-184c6.248-6.248 6.248-16.379 0-22.627l-22.627-22.627c-6.248-6.249-16.379-6.249-22.628 0L216 308.118l-70.059-70.059c-6.248-6.248-16.379-6.248-22.628 0l-22.627 22.627c-6.248 6.248-6.248 16.379 0 22.627l104 104c6.249 6.249 16.379 6.249 22.628.001z"/></svg>
<svg class="ic" style="left:791.40px;top:419.43px" width="10.4" height="10.4" viewBox="0 0 512 512"><path fill="#ff0d0d" d="M504 256c0 136.967-111.033 248-248 248S8 392.967 8 256 119.033 8 256 8s248 111.033 248 248zM227.314 387.314l184-184c6.248-6.248 6.248-16.379 0-22.627l-22.627-22.627c-6.248-6.249-16.379-6.249-22.628 0L216 308.118l-70.059-70.059c-6.248-6.248-16.379-6.248-22.628 0l-22.627 22.627c-6.248 6.248-6.248 16.379 0 22.627l104 104c6.249 6.249 16.379 6.249 22.628.001z"/></svg>
<svg class="ic" style="left:898.50px;top:419.43px" width="10.4" height="10.4" viewBox="0 0 512 512"><path fill="#808080" d="M504 256c0 136.967-111.033 248-248 248S8 392.967 8 256 119.033 8 256 8s248 111.033 248 248zM227.314 387.314l184-184c6.248-6.248 6.248-16.379 0-22.627l-22.627-22.627c-6.248-6.249-16.379-6.249-22.628 0L216 308.118l-70.059-70.059c-6.248-6.248-16.379-6.248-22.628 0l-22.627 22.627c-6.248 6.248-6.248 16.379 0 22.627l104 104c6.249 6.249 16.379 6.249 22.628.001z"/></svg>
<div class="rl" style="top:467.09px"></div>
<div class="cb" style="top:447.96px"></div>
<div class="bd" style="top:444.86px;background:#ff9307"></div>
<svg class="ic" style="left:544.60px;top:447.36px" width="10.4" height="10.4" viewBox="0 0 512 512"><path fill="#808080" d="M504 256c0 136.967-111.033 248-248 248S8 392.967 8 256 119.033 8 256 8s248 111.033 248 248zM227.314 387.314l184-184c6.248-6.248 6.248-16.379 0-22.627l-22.627-22.627c-6.248-6.249-16.379-6.249-22.628 0L216 308.118l-70.059-70.059c-6.248-6.248-16.379-6.248-22.628 0l-22.627 22.627c-6.248 6.248-6.248 16.379 0 22.627l104 104c6.249 6.249 16.379 6.249 22.628.001z"/></svg>
<svg class="ic" style="left:668.30px;top:447.36px" width="10.4" height="10.4" viewBox="0 0 512 512"><path fill="#ff0d0d" d="M504 256c0 136.967-111.033 248-248 248S8 392.967 8 256 119.033 8 256 8s248 111.033 248 248zM227.314 387.314l184-184c6.248-6.248 6.248-16.379 0-22.627l-22.627-22.627c-6.248-6.249-16.379-6.249-22.628 0L216 308.118l-70.059-70.059c-6.248-6.248-16.379-6.248-22.628 0l-22.627 22.627c-6.248 6.248-6.248 16.379 0 22.627l104 104c6.249 6.249 16.379 6.249 22.628.001z"/></svg>
<svg class="ic" style="left:791.40px;top:447.36px" width="10.4" height="10.4" viewBox="0 0 512 512"><path fill="#ff0d0d" d="M504 256c0 136.967-111.033 248-248 248S8 392.967 8 256 119.033 8 256 8s248 111.033 248 248zM227.314 387.314l184-184c6.248-6.248 6.248-16.379 0-22.627l-22.627-22.627c-6.248-6.249-16.379-6.249-22.628 0L216 308.118l-70.059-70.059c-6.248-6.248-16.379-6.248-22.628 0l-22.627 22.627c-6.248 6.248-6.248 16.379 0 22.627l104 104c6.249 6.249 16.379 6.249 22.628.001z"/></svg>
<svg class="ic" style="left:898.50px;top:447.36px" width="10.4" height="10.4" viewBox="0 0 512 512"><path fill="#808080" d="M504 256c0 136.967-111.033 248-248 248S8 392.967 8 256 119.033 8 256 8s248 111.033 248 248zM227.314 387.314l184-184c6.248-6.248 6.248-16.379 0-22.627l-22.627-22.627c-6.248-6.249-16.379-6.249-22.628 0L216 308.118l-70.059-70.059c-6.248-6.248-16.379-6.248-22.628 0l-22.627 22.627c-6.248 6.248-6.248 16.379 0 22.627l104 104c6.249 6.249 16.379 6.249 22.628.001z"/></svg>
<div class="rl" style="top:495.02px"></div>
<div class="cb" style="top:475.89px"></div>
<div class="bd" style="top:472.79px;background:#ff9307"></div>
<svg class="ic" style="left:544.60px;top:475.29px" width="10.4" height="10.4" viewBox="0 0 512 512"><path fill="#808080" d="M504 256c0 136.967-111.033 248-248 248S8 392.967 8 256 119.033 8 256 8s248 111.033 248 248zM227.314 387.314l184-184c6.248-6.248 6.248-16.379 0-22.627l-22.627-22.627c-6.248-6.249-16.379-6.249-22.628 0L216 308.118l-70.059-70.059c-6.248-6.248-16.379-6.248-22.628 0l-22.627 22.627c-6.248 6.248-6.248 16.379 0 22.627l104 104c6.249 6.249 16.379 6.249 22.628.001z"/></svg>
<svg class="ic" style="left:668.30px;top:475.29px" width="10.4" height="10.4" viewBox="0 0 512 512"><path fill="#ff0d0d" d="M504 256c0 136.967-111.033 248-248 248S8 392.967 8 256 119.033 8 256 8s248 111.033 248 248zM227.314 387.314l184-184c6.248-6.248 6.248-16.379 0-22.627l-22.627-22.627c-6.248-6.249-16.379-6.249-22.628 0L216 308.118l-70.059-70.059c-6.248-6.248-16.379-6.248-22.628 0l-22.627 22.627c-6.248 6.248-6.248 16.379 0 22.627l104 104c6.249 6.249 16.379 6.249 22.628.001z"/></svg>
<svg class="ic" style="left:791.40px;top:475.29px" width="10.4" height="10.4" viewBox="0 0 512 512"><path fill="#ff0d0d" d="M504 256c0 136.967-111.033 248-248 248S8 392.967 8 256 119.033 8 256 8s248 111.033 248 248zM227.314 387.314l184-184c6.248-6.248 6.248-16.379 0-22.627l-22.627-22.627c-6.248-6.249-16.379-6.249-22.628 0L216 308.118l-70.059-70.059c-6.248-6.248-16.379-6.248-22.628 0l-22.627 22.627c-6.248 6.248-6.248 16.379 0 22.627l104 104c6.249 6.249 16.379 6.249 22.628.001z"/></svg>
<svg class="ic" style="left:898.50px;top:475.29px" width="10.4" height="10.4" viewBox="0 0 512 512"><path fill="#808080" d="M504 256c0 136.967-111.033 248-248 248S8 392.967 8 256 119.033 8 256 8s248 111.033 248 248zM227.314 387.314l184-184c6.248-6.248 6.248-16.379 0-22.627l-22.627-22.627c-6.248-6.249-16.379-6.249-22.628 0L216 308.118l-70.059-70.059c-6.248-6.248-16.379-6.248-22.628 0l-22.627 22.627c-6.248 6.248-6.248 16.379 0 22.627l104 104c6.249 6.249 16.379 6.249 22.628.001z"/></svg>
<div class="rl" style="top:522.95px"></div>
<div class="cb" style="top:503.82px"></div>
<div class="bd" style="top:500.72px;background:#f6ba2b"></div>
<svg class="ic" style="left:544.60px;top:503.22px" width="10.4" height="10.4" viewBox="0 0 512 512"><path fill="#808080" d="M504 256c0 136.967-111.033 248-248 248S8 392.967 8 256 119.033 8 256 8s248 111.033 248 248zM227.314 387.314l184-184c6.248-6.248 6.248-16.379 0-22.627l-22.627-22.627c-6.248-6.249-16.379-6.249-22.628 0L216 308.118l-70.059-70.059c-6.248-6.248-16.379-6.248-22.628 0l-22.627 22.627c-6.248 6.248-6.248 16.379 0 22.627l104 104c6.249 6.249 16.379 6.249 22.628.001z"/></svg>
<svg class="ic" style="left:668.30px;top:503.22px" width="10.4" height="10.4" viewBox="0 0 512 512"><path fill="#ff0d0d" d="M504 256c0 136.967-111.033 248-248 248S8 392.967 8 256 119.033 8 256 8s248 111.033 248 248zM227.314 387.314l184-184c6.248-6.248 6.248-16.379 0-22.627l-22.627-22.627c-6.248-6.249-16.379-6.249-22.628 0L216 308.118l-70.059-70.059c-6.248-6.248-16.379-6.248-22.628 0l-22.627 22.627c-6.248 6.248-6.248 16.379 0 22.627l104 104c6.249 6.249 16.379 6.249 22.628.001z"/></svg>
<svg class="ic" style="left:791.40px;top:503.22px" width="10.4" height="10.4" viewBox="0 0 512 512"><path fill="#ff0d0d" d="M504 256c0 136.967-111.033 248-248 248S8 392.967 8 256 119.033 8 256 8s248 111.033 248 248zM227.314 387.314l184-184c6.248-6.248 6.248-16.379 0-22.627l-22.627-22.627c-6.248-6.249-16.379-6.249-22.628 0L216 308.118l-70.059-70.059c-6.248-6.248-16.379-6.248-22.628 0l-22.627 22.627c-6.248 6.248-6.248 16.379 0 22.627l104 104c6.249 6.249 16.379 6.249 22.628.001z"/></svg>
<svg class="ic" style="left:898.50px;top:503.22px" width="10.4" height="10.4" viewBox="0 0 512 512"><path fill="#808080" d="M504 256c0 136.967-111.033 248-248 248S8 392.967 8 256 119.033 8 256 8s248 111.033 248 248zM227.314 387.314l184-184c6.248-6.248 6.248-16.379 0-22.627l-22.627-22.627c-6.248-6.249-16.379-6.249-22.628 0L216 308.118l-70.059-70.059c-6.248-6.248-16.379-6.248-22.628 0l-22.627 22.627c-6.248 6.248-6.248 16.379 0 22.627l104 104c6.249 6.249 16.379 6.249 22.628.001z"/></svg>
<div class="cb" style="top:531.75px"></div>
<div class="bd" style="top:528.65px;background:#f6ba2b"></div>
<svg class="ic" style="left:544.60px;top:531.15px" width="10.4" height="10.4" viewBox="0 0 512 512"><path fill="#808080" d="M504 256c0 136.967-111.033 248-248 248S8 392.967 8 256 119.033 8 256 8s248 111.033 248 248zM227.314 387.314l184-184c6.248-6.248 6.248-16.379 0-22.627l-22.627-22.627c-6.248-6.249-16.379-6.249-22.628 0L216 308.118l-70.059-70.059c-6.248-6.248-16.379-6.248-22.628 0l-22.627 22.627c-6.248 6.248-6.248 16.379 0 22.627l104 104c6.249 6.249 16.379 6.249 22.628.001z"/></svg>
<svg class="ic" style="left:668.30px;top:531.15px" width="10.4" height="10.4" viewBox="0 0 512 512"><path fill="#ff0d0d" d="M504 256c0 136.967-111.033 248-248 248S8 392.967 8 256 119.033 8 256 8s248 111.033 248 248zM227.314 387.314l184-184c6.248-6.248 6.248-16.379 0-22.627l-22.627-22.627c-6.248-6.249-16.379-6.249-22.628 0L216 308.118l-70.059-70.059c-6.248-6.248-16.379-6.248-22.628 0l-22.627 22.627c-6.248 6.248-6.248 16.379 0 22.627l104 104c6.249 6.249 16.379 6.249 22.628.001z"/></svg>
<svg class="ic" style="left:791.40px;top:531.15px" width="10.4" height="10.4" viewBox="0 0 512 512"><path fill="#ff0d0d" d="M504 256c0 136.967-111.033 248-248 248S8 392.967 8 256 119.033 8 256 8s248 111.033 248 248zM227.314 387.314l184-184c6.248-6.248 6.248-16.379 0-22.627l-22.627-22.627c-6.248-6.249-16.379-6.249-22.628 0L216 308.118l-70.059-70.059c-6.248-6.248-16.379-6.248-22.628 0l-22.627 22.627c-6.248 6.248-6.248 16.379 0 22.627l104 104c6.249 6.249 16.379 6.249 22.628.001z"/></svg>
<svg class="ic" style="left:898.50px;top:531.15px" width="10.4" height="10.4" viewBox="0 0 512 512"><path fill="#808080" d="M504 256c0 136.967-111.033 248-248 248S8 392.967 8 256 119.033 8 256 8s248 111.033 248 248zM227.314 387.314l184-184c6.248-6.248 6.248-16.379 0-22.627l-22.627-22.627c-6.248-6.249-16.379-6.249-22.628 0L216 308.118l-70.059-70.059c-6.248-6.248-16.379-6.248-22.628 0l-22.627 22.627c-6.248 6.248-6.248 16.379 0 22.627l104 104c6.249 6.249 16.379 6.249 22.628.001z"/></svg>
<span class="t" id="t0" style="left:12.40px;top:18.03px;font-size:12.6px;color:#23263a;font-weight:700;transform:scaleX(1.0402);">脆弱性</span>
<span class="t" id="t1" style="left:92.60px;top:16.85px;font-size:14.0px;color:#23263a;font-weight:700;transform:scaleX(1.0367);">3095</span>
<span class="t" id="t2" style="left:128.40px;top:19.73px;font-size:11.3px;color:#5a5f6b;transform:scaleX(0.9459);">件</span>
<span class="t" id="t3" style="left:160.30px;top:17.82px;font-size:11.2px;color:#1b8a3b;transform:scaleX(0.9955);">表示列設定</span>
<span class="t" id="t4" style="left:748.40px;top:21.89px;font-size:11.0px;color:#1b8a3b;transform:scaleX(0.9636);">全て</span>
<span class="t" id="t5" style="left:793.00px;top:21.89px;font-size:11.0px;color:#1b8a3b;transform:scaleX(1.0000);">非表示</span>
<span class="t" id="t6" style="left:876.80px;top:18.77px;font-size:10.9px;color:#1b8a3b;transform:scaleX(1.0001);">更新</span>
<span class="t" id="t7" style="left:931.00px;top:17.52px;font-size:11.2px;color:#1b8a3b;transform:scaleX(0.9929);">アクション</span>
<span class="t" id="t8" style="left:32.10px;top:56.06px;font-size:10.8px;color:#23263a;font-weight:700;transform:scaleX(0.8772);">CVE-ID</span>
<span class="t" id="t9" style="left:116.10px;top:56.49px;font-size:11.0px;color:#23263a;font-weight:700;transform:scaleX(0.9879);">深刻度</span>
<span class="t" id="t10" style="left:204.10px;top:56.49px;font-size:11.0px;color:#23263a;font-weight:700;transform:scaleX(0.9879);">サマリ</span>
<span class="t" id="t11" style="left:412.00px;top:56.06px;font-size:10.8px;color:#23263a;font-weight:700;transform:scaleX(0.8619);">CVSSv3</span>
<span class="t" id="t12" style="left:502.10px;top:56.49px;font-size:11.0px;color:#23263a;font-weight:700;transform:scaleX(0.9961);">攻撃コードあり</span>
<span class="t" id="t13" style="left:614.30px;top:56.49px;font-size:11.0px;color:#23263a;font-weight:700;transform:scaleX(1.0010);">ネットワーク攻撃可</span>
<span class="t" id="t14" style="left:749.70px;top:56.49px;font-size:11.0px;color:#23263a;font-weight:700;transform:scaleX(0.9909);">権限なし攻撃可</span>
<span class="t" id="t15" style="left:861.40px;top:56.49px;font-size:11.0px;color:#23263a;font-weight:700;transform:scaleX(1.0015);">プロセス稼働</span>
<span class="t" id="t16" style="left:28.20px;top:112.83px;font-size:10.6px;color:#4d5361;transform:scaleX(0.9038);">CVE-2021-38004</span>
<span class="t" id="t17" style="left:150.60px;top:112.59px;font-size:10.7px;color:#fff;font-weight:700;transform-origin:50% 50%;transform:translateX(-50%) scaleX(0.9298);">MEDIUM</span>
<span class="t" id="t18" style="left:198.80px;top:112.71px;font-size:10.5px;color:#4d5361;transform:scaleX(1.0295);">Insufficient policy enforcement in Autofil…</span>
<span class="t" id="t19" style="left:448.40px;top:113.27px;font-size:10.9px;color:#2d3142;font-weight:700;transform-origin:50% 50%;transform:translateX(-50%) scaleX(1.0568);">4.3</span>
<span class="t" id="t20" style="left:28.20px;top:140.76px;font-size:10.6px;color:#4d5361;transform:scaleX(0.9038);">CVE-2021-38003</span>
<span class="t" id="t21" style="left:150.60px;top:140.52px;font-size:10.7px;color:#fff;font-weight:700;transform-origin:50% 50%;transform:translateX(-50%) scaleX(0.9357);">HIGH</span>
<span class="t" id="t22" style="left:198.80px;top:140.64px;font-size:10.5px;color:#4d5361;transform:scaleX(1.0121);">Inappropriate implementation in V8 in G…</span>
<span class="t" id="t23" style="left:448.40px;top:141.20px;font-size:10.9px;color:#2d3142;font-weight:700;transform-origin:50% 50%;transform:translateX(-50%) scaleX(1.0568);">8.8</span>
<span class="t" id="t24" style="left:28.20px;top:168.69px;font-size:10.6px;color:#4d5361;transform:scaleX(0.9038);">CVE-2021-38002</span>
<span class="t" id="t25" style="left:150.60px;top:168.45px;font-size:10.7px;color:#fff;font-weight:700;transform-origin:50% 50%;transform:translateX(-50%) scaleX(0.8862);">CRITICAL</span>
<span class="t" id="t26" style="left:198.80px;top:168.57px;font-size:10.5px;color:#4d5361;transform:scaleX(0.9797);">Use after free in Web Transport in Google…</span>
<span class="t" id="t27" style="left:448.40px;top:169.13px;font-size:10.9px;color:#2d3142;font-weight:700;transform-origin:50% 50%;transform:translateX(-50%) scaleX(1.0568);">9.6</span>
<span class="t" id="t28" style="left:28.20px;top:196.62px;font-size:10.6px;color:#4d5361;transform:scaleX(0.9038);">CVE-2021-38001</span>
<span class="t" id="t29" style="left:150.60px;top:196.38px;font-size:10.7px;color:#fff;font-weight:700;transform-origin:50% 50%;transform:translateX(-50%) scaleX(0.9357);">HIGH</span>
<span class="t" id="t30" style="left:198.80px;top:196.50px;font-size:10.5px;color:#4d5361;transform:scaleX(0.9786);">Type confusion in V8 in Google Chrome p…</span>
<span class="t" id="t31" style="left:448.40px;top:197.06px;font-size:10.9px;color:#2d3142;font-weight:700;transform-origin:50% 50%;transform:translateX(-50%) scaleX(1.0568);">8.8</span>
<span class="t" id="t32" style="left:28.20px;top:224.55px;font-size:10.6px;color:#4d5361;transform:scaleX(0.9038);">CVE-2021-38000</span>
<span class="t" id="t33" style="left:150.60px;top:224.31px;font-size:10.7px;color:#fff;font-weight:700;transform-origin:50% 50%;transform:translateX(-50%) scaleX(0.9298);">MEDIUM</span>
<span class="t" id="t34" style="left:198.80px;top:224.43px;font-size:10.5px;color:#4d5361;transform:scaleX(1.0368);">Insufficient validation of untrusted input…</span>
<span class="t" id="t35" style="left:448.40px;top:224.99px;font-size:10.9px;color:#2d3142;font-weight:700;transform-origin:50% 50%;transform:translateX(-50%) scaleX(1.0568);">6.1</span>
<span class="t" id="t36" style="left:28.20px;top:252.48px;font-size:10.6px;color:#4d5361;transform:scaleX(0.9038);">CVE-2021-37999</span>
<span class="t" id="t37" style="left:150.60px;top:252.24px;font-size:10.7px;color:#fff;font-weight:700;transform-origin:50% 50%;transform:translateX(-50%) scaleX(0.9298);">MEDIUM</span>
<span class="t" id="t38" style="left:198.80px;top:252.36px;font-size:10.5px;color:#4d5361;transform:scaleX(1.0060);">Insufficient data validation in New Tab P…</span>
<span class="t" id="t39" style="left:448.40px;top:252.92px;font-size:10.9px;color:#2d3142;font-weight:700;transform-origin:50% 50%;transform:translateX(-50%) scaleX(1.0568);">6.1</span>
<span class="t" id="t40" style="left:28.20px;top:280.41px;font-size:10.6px;color:#4d5361;transform:scaleX(0.9038);">CVE-2021-37998</span>
<span class="t" id="t41" style="left:150.60px;top:280.17px;font-size:10.7px;color:#fff;font-weight:700;transform-origin:50% 50%;transform:translateX(-50%) scaleX(0.9357);">HIGH</span>
<span class="t" id="t42" style="left:198.80px;top:280.29px;font-size:10.5px;color:#4d5361;transform:scaleX(0.9732);">Use after free in Garbage Collection in Go…</span>
<span class="t" id="t43" style="left:448.40px;top:280.85px;font-size:10.9px;color:#2d3142;font-weight:700;transform-origin:50% 50%;transform:translateX(-50%) scaleX(1.0568);">8.8</span>
<span class="t" id="t44" style="left:28.20px;top:308.34px;font-size:10.6px;color:#4d5361;transform:scaleX(0.9038);">CVE-2021-37997</span>
<span class="t" id="t45" style="left:150.60px;top:308.10px;font-size:10.7px;color:#fff;font-weight:700;transform-origin:50% 50%;transform:translateX(-50%) scaleX(0.9357);">HIGH</span>
<span class="t" id="t46" style="left:198.80px;top:308.22px;font-size:10.5px;color:#4d5361;transform:scaleX(0.9765);">Use after free in Sign-In in Google Chrom…</span>
<span class="t" id="t47" style="left:448.40px;top:308.78px;font-size:10.9px;color:#2d3142;font-weight:700;transform-origin:50% 50%;transform:translateX(-50%) scaleX(1.0568);">8.8</span>
<span class="t" id="t48" style="left:28.20px;top:336.27px;font-size:10.6px;color:#4d5361;transform:scaleX(0.9038);">CVE-2021-37996</span>
<span class="t" id="t49" style="left:150.60px;top:336.03px;font-size:10.7px;color:#fff;font-weight:700;transform-origin:50% 50%;transform:translateX(-50%) scaleX(0.9298);">MEDIUM</span>
<span class="t" id="t50" style="left:198.80px;top:336.15px;font-size:10.5px;color:#4d5361;transform:scaleX(1.0368);">Insufficient validation of untrusted input…</span>
<span class="t" id="t51" style="left:448.40px;top:336.71px;font-size:10.9px;color:#2d3142;font-weight:700;transform-origin:50% 50%;transform:translateX(-50%) scaleX(1.0568);">5.5</span>
<span class="t" id="t52" style="left:28.20px;top:364.20px;font-size:10.6px;color:#4d5361;transform:scaleX(0.9038);">CVE-2021-37995</span>
<span class="t" id="t53" style="left:150.60px;top:363.96px;font-size:10.7px;color:#fff;font-weight:700;transform-origin:50% 50%;transform:translateX(-50%) scaleX(0.9298);">MEDIUM</span>
<span class="t" id="t54" style="left:198.80px;top:364.08px;font-size:10.5px;color:#4d5361;transform:scaleX(1.0193);">Inappropriate implementation in WebAp…</span>
<span class="t" id="t55" style="left:448.40px;top:364.64px;font-size:10.9px;color:#2d3142;font-weight:700;transform-origin:50% 50%;transform:translateX(-50%) scaleX(1.0568);">6.5</span>
<span class="t" id="t56" style="left:28.20px;top:392.13px;font-size:10.6px;color:#4d5361;transform:scaleX(0.9038);">CVE-2021-37994</span>
<span class="t" id="t57" style="left:150.60px;top:391.89px;font-size:10.7px;color:#fff;font-weight:700;transform-origin:50% 50%;transform:translateX(-50%) scaleX(0.9298);">MEDIUM</span>
<span class="t" id="t58" style="left:198.80px;top:392.01px;font-size:10.5px;color:#4d5361;transform:scaleX(1.0225);">Inappropriate implementation in iFrame …</span>
<span class="t" id="t59" style="left:448.40px;top:392.57px;font-size:10.9px;color:#2d3142;font-weight:700;transform-origin:50% 50%;transform:translateX(-50%) scaleX(1.0568);">6.5</span>
<span class="t" id="t60" style="left:28.20px;top:420.06px;font-size:10.6px;color:#4d5361;transform:scaleX(0.9038);">CVE-2021-37993</span>
<span class="t" id="t61" style="left:150.60px;top:419.82px;font-size:10.7px;color:#fff;font-weight:700;transform-origin:50% 50%;transform:translateX(-50%) scaleX(0.9357);">HIGH</span>
<span class="t" id="t62" style="left:198.80px;top:419.94px;font-size:10.5px;color:#4d5361;transform:scaleX(0.9704);">Use after free in PDF Accessibility in Goo…</span>
<span class="t" id="t63" style="left:448.40px;top:420.50px;font-size:10.9px;color:#2d3142;font-weight:700;transform-origin:50% 50%;transform:translateX(-50%) scaleX(1.0568);">8.8</span>
<span class="t" id="t64" style="left:28.20px;top:447.99px;font-size:10.6px;color:#4d5361;transform:scaleX(0.9038);">CVE-2021-37992</span>
<span class="t" id="t65" style="left:150.60px;top:447.75px;font-size:10.7px;color:#fff;font-weight:700;transform-origin:50% 50%;transform:translateX(-50%) scaleX(0.9357);">HIGH</span>
<span class="t" id="t66" style="left:198.80px;top:447.87px;font-size:10.5px;color:#4d5361;transform:scaleX(0.9859);">Out of bounds read in WebAudio in Goog…</span>
<span class="t" id="t67" style="left:448.40px;top:448.43px;font-size:10.9px;color:#2d3142;font-weight:700;transform-origin:50% 50%;transform:translateX(-50%) scaleX(1.0568);">8.8</span>
<span class="t" id="t68" style="left:28.20px;top:475.92px;font-size:10.6px;color:#4d5361;transform:scaleX(0.9038);">CVE-2021-37991</span>
<span class="t" id="t69" style="left:150.60px;top:475.68px;font-size:10.7px;color:#fff;font-weight:700;transform-origin:50% 50%;transform:translateX(-50%) scaleX(0.9357);">HIGH</span>
<span class="t" id="t70" style="left:198.80px;top:475.80px;font-size:10.5px;color:#4d5361;transform:scaleX(0.9694);">Race in V8 in Google Chrome prior to 95.…</span>
<span class="t" id="t71" style="left:448.40px;top:476.36px;font-size:10.9px;color:#2d3142;font-weight:700;transform-origin:50% 50%;transform:translateX(-50%) scaleX(1.0568);">7.5</span>
<span class="t" id="t72" style="left:28.20px;top:503.85px;font-size:10.6px;color:#4d5361;transform:scaleX(0.9038);">CVE-2021-37990</span>
<span class="t" id="t73" style="left:150.60px;top:503.61px;font-size:10.7px;color:#fff;font-weight:700;transform-origin:50% 50%;transform:translateX(-50%) scaleX(0.9298);">MEDIUM</span>
<span class="t" id="t74" style="left:198.80px;top:503.73px;font-size:10.5px;color:#4d5361;transform:scaleX(1.0183);">Inappropriate implementation in WebVie…</span>
<span class="t" id="t75" style="left:448.40px;top:504.29px;font-size:10.9px;color:#2d3142;font-weight:700;transform-origin:50% 50%;transform:translateX(-50%) scaleX(1.0568);">5.5</span>
<span class="t" id="t76" style="left:28.20px;top:531.78px;font-size:10.6px;color:#4d5361;transform:scaleX(0.9038);">CVE-2021-37989</span>
<span class="t" id="t77" style="left:150.60px;top:531.54px;font-size:10.7px;color:#fff;font-weight:700;transform-origin:50% 50%;transform:translateX(-50%) scaleX(0.9298);">MEDIUM</span>
<span class="t" id="t78" style="left:198.80px;top:531.66px;font-size:10.5px;color:#4d5361;transform:scaleX(1.0312);">Inappropriate implementation in Blink i…</span>
<span class="t" id="t79" style="left:448.40px;top:532.22px;font-size:10.9px;color:#2d3142;font-weight:700;transform-origin:50% 50%;transform:translateX(-50%) scaleX(1.0568);">6.5</span>
<span class="t" id="t80" style="left:35.50px;top:77.70px;font-size:11.1px;color:#8f9297;transform:scaleX(0.9643);width:51.54px;overflow:hidden;">filter column...</span>
<span class="t" id="t81" style="left:120.30px;top:77.70px;font-size:11.1px;color:#8f9297;transform:scaleX(0.9643);width:53.82px;overflow:hidden;">filter column...</span>
<span class="t" id="t82" style="left:207.30px;top:77.70px;font-size:11.1px;color:#8f9297;transform:scaleX(0.9643);">filter column...</span>
<span class="t" id="t83" style="left:414.90px;top:77.70px;font-size:11.1px;color:#8f9297;transform:scaleX(0.8943);">Min</span>
<span class="t" id="t84" style="left:451.80px;top:77.70px;font-size:11.1px;color:#8f9297;transform:scaleX(0.8727);">Max</span>
<span class="t" id="t85" style="left:506.20px;top:77.70px;font-size:11.1px;color:#8f9297;transform:scaleX(0.9643);">filter column...</span>
<span class="t" id="t86" style="left:618.20px;top:77.70px;font-size:11.1px;color:#8f9297;transform:scaleX(0.9643);">filter column...</span>
<span class="t" id="t87" style="left:753.50px;top:77.70px;font-size:11.1px;color:#8f9297;transform:scaleX(0.9643);">filter column...</span>
<span class="t" id="t88" style="left:865.20px;top:77.70px;font-size:11.1px;color:#8f9297;transform:scaleX(0.9643);">filter column...</span>
<div class="fr"></div>
</body></html>
